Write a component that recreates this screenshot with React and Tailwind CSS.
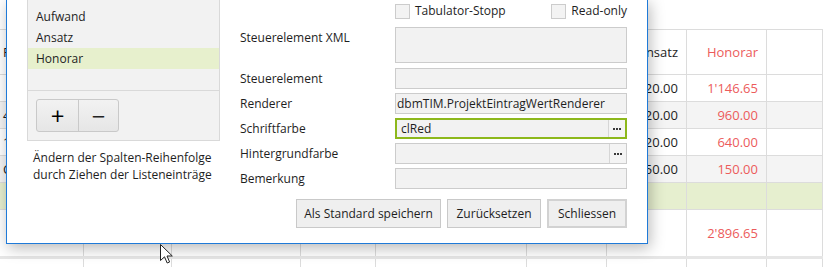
import React from "react";

const COLS = [84, 88, 129, 75, 151, 80, 80, 80, 56];

function GridRow({ h, bg = "bg-white", cells = [], border = "border-b", cellClass = "" }) {
  return (
    <div className={`flex ${border} border-[#dcdcdc] ${bg}`} style={{ height: h }}>
      {COLS.map((w, i) => {
        const c = cells[i] || {};
        return (
          <div
            key={i}
            className={`flex h-full shrink-0 items-center border-r border-[#dcdcdc] px-[8px] ${c.left ? "justify-start pl-[3px]" : "justify-end"} ${c.red ? "text-[#ec5b5b]" : "text-[#1e1e1e]"} ${cellClass}`}
            style={{ width: w }}
          >
            {c.t || ""}
          </div>
        );
      })}
    </div>
  );
}

function Field({ h = 21, green = false, children, ellipsis = false }) {
  return (
    <div
      className={`flex w-[232px] items-center bg-[#f2f2f2] ${green ? "border-2 border-[#8db81c]" : "border border-[#cccccc]"}`}
      style={{ height: h }}
    >
      <div className={`flex-1 truncate ${green ? "pl-[4px]" : "pl-[1px]"}`}>{children}</div>
      {ellipsis && (
        <div className="flex h-full w-[17px] items-center justify-center gap-[1px] border-l border-[#d6d6d6] bg-[#f4f4f4]">
          <span className="h-[2px] w-[2px] bg-[#3a3a3a]" />
          <span className="h-[2px] w-[2px] bg-[#3a3a3a]" />
          <span className="h-[2px] w-[2px] bg-[#3a3a3a]" />
        </div>
      )}
    </div>
  );
}

function FormRow({ label, children, className = "", labelTop = false }) {
  return (
    <div className={`flex ${labelTop ? "items-start" : "items-center"} ${className}`}>
      <div className={`w-[155px] shrink-0 ${labelTop ? "pt-[2px]" : ""}`}>{label}</div>
      {children}
    </div>
  );
}

function Checkbox({ label }) {
  return (
    <div className="flex items-center">
      <div className="h-[15px] w-[15px] border border-[#cccccc] bg-[#f3f3f3]" />
      <span className="ml-[5px]">{label}</span>
    </div>
  );
}

export default function App() {
  return (
    <div className="relative h-[267px] w-[823px] overflow-hidden bg-white font-['Open_Sans',sans-serif] text-[12px] leading-[18px] text-[#1e1e1e]">
      {/* background grid */}
      <div className="h-[30px] border-b border-[#dcdcdc]" />
      <GridRow
        h={45}
        cells={[{ t: "Pos", left: true }, {}, {}, {}, {}, {}, { t: "Ansatz" }, { t: "Honorar", red: true }]}
        cellClass="text-[13px]"
      />
      <GridRow h={27} cells={[{}, {}, {}, {}, {}, {}, { t: "320.00" }, { t: "1'146.65", red: true }]} cellClass="text-[13px]" />
      <GridRow h={27} bg="bg-[#f4f4f4]" cells={[{ t: "4", left: true }, {}, {}, {}, {}, {}, { t: "320.00" }, { t: "960.00", red: true }]} cellClass="text-[13px]" />
      <GridRow h={27} cells={[{ t: "1", left: true }, {}, {}, {}, {}, {}, { t: "320.00" }, { t: "640.00", red: true }]} cellClass="text-[13px]" />
      <GridRow h={27} bg="bg-[#f4f4f4]" cells={[{ t: "C", left: true }, {}, {}, {}, {}, {}, { t: "150.00" }, { t: "150.00", red: true }]} cellClass="text-[13px]" />
      <GridRow h={27} bg="bg-[#e6efcf]" cells={[]} />
      <GridRow h={46} border="" cells={[{}, {}, {}, {}, {}, {}, {}, { t: "2'896.65", red: true }]} cellClass="text-[13px]" />
      <div className="h-[3px] bg-[#e6e6e6]" />
      <GridRow h={20} border="" cells={[]} />

      {/* dialog window */}
      <div className="absolute left-[6px] top-[-1px] flex h-[245px] w-[642px] border border-[#1f7ad8] bg-white pl-[20px] pr-[19px] shadow-[2px_4px_14px_rgba(0,0,0,0.28)]">
        {/* left column */}
        <div className="flex w-[193px] shrink-0 flex-col">
          <div className="-mt-[10px] flex h-[151px] flex-col border border-[#d9d9d9] bg-[#f2f2f2]">
            <div className="flex flex-1 flex-col pt-[15px]">
              <div className="flex h-[21px] items-center pl-[8px]">Aufwand</div>
              <div className="flex h-[21px] items-center pl-[8px]">Ansatz</div>
              <div className="flex h-[21px] items-center bg-[#e7f0cd] pl-[8px]">Honorar</div>
            </div>
            <div className="h-[50px] border-t border-[#d9d9d9] pl-[8px] pt-[8px]">
              <div className="flex h-[33px] w-[83px] overflow-hidden rounded-[3px] border border-[#c9c9c9] bg-gradient-to-b from-[#f2f2f2] to-[#e6e6e6]">
                <div className="flex w-[42px] items-center justify-center border-r border-[#c9c9c9] text-[24px] leading-none text-black">+</div>
                <div className="flex flex-1 items-center justify-center text-[24px] leading-none text-[#222]">−</div>
              </div>
            </div>
          </div>
          <div className="ml-[6px] mt-[8px] leading-[17px]">
            Ändern der Spalten-Reihenfolge
            <br />
            durch Ziehen der Listeneinträge
          </div>
        </div>

        {/* right column */}
        <div className="ml-[20px] flex w-[387px] flex-col">
          <div className="flex h-[20px] items-end">
            <div className="w-[155px] shrink-0" />
            <div className="flex w-[232px] justify-between">
              <Checkbox label="Tabulator-Stopp" />
              <Checkbox label="Read-only" />
            </div>
          </div>
          <FormRow label="Steuerelement XML" className="mt-[7px]" labelTop>
            <Field h={36} />
          </FormRow>
          <FormRow label="Steuerelement" className="mt-[5px]">
            <Field />
          </FormRow>
          <FormRow label="Renderer" className="mt-[4px]">
            <Field>dbmTIM.ProjektEintragWertRenderer</Field>
          </FormRow>
          <FormRow label="Schriftfarbe" className="mt-[4px]">
            <Field green ellipsis>clRed</Field>
          </FormRow>
          <FormRow label="Hintergrundfarbe" className="mt-[4px]">
            <Field ellipsis />
          </FormRow>
          <FormRow label="Bemerkung" className="mt-[4px]">
            <Field />
          </FormRow>
          <div className="mt-[10px] flex justify-end gap-[6px]">
            <div className="flex h-[29px] w-[145px] items-center justify-center border border-[#c9c9c9] bg-[#efefef]">Als Standard speichern</div>
            <div className="flex h-[29px] w-[94px] items-center justify-center border border-[#c9c9c9] bg-[#efefef]">Zurücksetzen</div>
            <div className="flex h-[29px] w-[80px] items-center justify-center border-2 border-[#d2d2d2] bg-[#efefef]">Schliessen</div>
          </div>
        </div>
      </div>

      {/* mouse cursor */}
      <svg className="absolute left-[160px] top-[244px]" width="14" height="21" viewBox="0 0 14 21">
        <path d="M0.5 0.5 L0.5 16.5 L4.5 12.8 L7.2 19 L9.6 18 L7 12 L12.3 12 Z" fill="white" stroke="#222" strokeWidth="1" strokeLinejoin="round" />
      </svg>
    </div>
  );
}
